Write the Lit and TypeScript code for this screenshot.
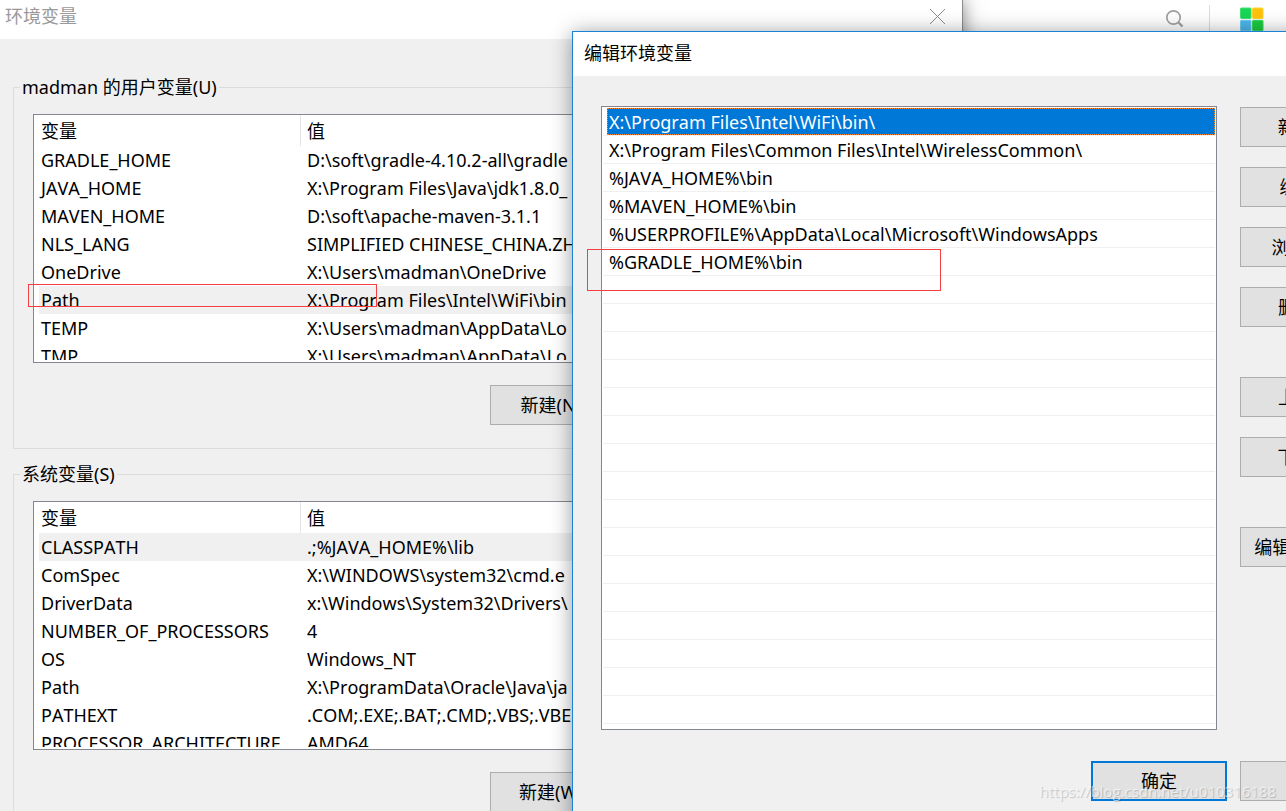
import { LitElement, html, css } from "lit";
import { customElement, property } from "lit/decorators.js";
import { classMap } from "lit/directives/class-map.js";

interface Variable {
  name: string;
  value: string;
  selected?: boolean;
}

const userVariables: Variable[] = [
  { name: "GRADLE_HOME", value: "D:\\soft\\gradle-4.10.2-all\\gradle" },
  { name: "JAVA_HOME", value: "X:\\Program Files\\Java\\jdk1.8.0_" },
  { name: "MAVEN_HOME", value: "D:\\soft\\apache-maven-3.1.1" },
  { name: "NLS_LANG", value: "SIMPLIFIED CHINESE_CHINA.ZH" },
  { name: "OneDrive", value: "X:\\Users\\madman\\OneDrive" },
  { name: "Path", value: "X:\\Program Files\\Intel\\WiFi\\bin", selected: true },
  { name: "TEMP", value: "X:\\Users\\madman\\AppData\\Lo" },
  { name: "TMP", value: "X:\\Users\\madman\\AppData\\Lo" },
];

const systemVariables: Variable[] = [
  { name: "CLASSPATH", value: ".;%JAVA_HOME%\\lib", selected: true },
  { name: "ComSpec", value: "X:\\WINDOWS\\system32\\cmd.e" },
  { name: "DriverData", value: "x:\\Windows\\System32\\Drivers\\" },
  { name: "NUMBER_OF_PROCESSORS", value: "4" },
  { name: "OS", value: "Windows_NT" },
  { name: "Path", value: "X:\\ProgramData\\Oracle\\Java\\ja" },
  { name: "PATHEXT", value: ".COM;.EXE;.BAT;.CMD;.VBS;.VBE" },
  { name: "PROCESSOR_ARCHITECTURE", value: "AMD64" },
];

const pathEntries = [
  "X:\\Program Files\\Intel\\WiFi\\bin\\",
  "X:\\Program Files\\Common Files\\Intel\\WirelessCommon\\",
  "%JAVA_HOME%\\bin",
  "%MAVEN_HOME%\\bin",
  "%USERPROFILE%\\AppData\\Local\\Microsoft\\WindowsApps",
  "%GRADLE_HOME%\\bin",
];

const visibleRows = 22;

const buttonStyles = css`
  button {
    box-sizing: border-box;
    width: 136px;
    height: 40px;
    padding: 0 0 2px;
    border: 1px solid #adadad;
    border-radius: 0;
    background: #e1e1e1;
    color: #000;
    font: inherit;
    white-space: nowrap;
  }
`;

@customElement("variable-group")
class VariableGroup extends LitElement {
  @property() label = "";
  @property({ attribute: false }) variables: Variable[] = [];
  @property({ attribute: false }) actions: string[] = [];

  static styles = [
    buttonStyles,
    css`
      :host {
        display: block;
      }
      fieldset {
        min-width: 0;
        margin: 0;
        padding: 14px 19px 23px;
        border: 1px solid #dcdcdc;
      }
      legend {
        margin-left: -13px;
        padding: 0 2px;
        line-height: 26px;
      }
      .frame {
        height: 245px;
        padding: 0 1px 2px 5px;
        border: 1px solid #828790;
        background: #fff;
      }
      .scroll {
        height: 100%;
        overflow: hidden;
      }
      table {
        width: 100%;
        table-layout: fixed;
        border-collapse: separate;
        border-spacing: 0;
      }
      .name-column {
        width: 262px;
      }
      th,
      td {
        padding: 0 2px;
        line-height: 28px;
        font-weight: 400;
        text-align: left;
        white-space: nowrap;
        overflow: hidden;
      }
      th {
        padding-top: 2px;
        line-height: 29px;
      }
      th + th,
      td + td {
        padding-left: 6px;
      }
      th:first-child {
        border-right: 1px solid #e5e5e5;
      }
      .selected {
        background: #f0f0f0;
      }
      .actions {
        display: flex;
        justify-content: flex-end;
        gap: 16px;
        margin-top: 22px;
      }
    `,
  ];

  render() {
    return html`
      <fieldset>
        <legend>${this.label}</legend>
        <div class="frame">
          <div class="scroll">
            <table>
              <colgroup>
                <col class="name-column" />
                <col />
              </colgroup>
              <thead>
                <tr>
                  <th scope="col">变量</th>
                  <th scope="col">值</th>
                </tr>
              </thead>
              <tbody>
                ${this.variables.map(
                  (v) => html`<tr class=${classMap({ selected: !!v.selected })}>
                    <td>${v.name}</td>
                    <td>${v.value}</td>
                  </tr>`
                )}
              </tbody>
            </table>
          </div>
        </div>
        <div class="actions">
          ${this.actions.map((a) => html`<button type="button">${a}</button>`)}
        </div>
      </fieldset>
    `;
  }
}

@customElement("path-editor")
class PathEditor extends LitElement {
  static styles = [
    buttonStyles,
    css`
      :host {
        display: block;
        box-sizing: border-box;
        border: 1px solid #1883d7;
        background: #f0f0f0;
        box-shadow: 0 2px 20px rgba(0, 0, 0, 0.4);
      }
      h2 {
        margin: 0;
        padding: 0 0 2px 11px;
        background: #fff;
        font-size: 18px;
        font-weight: 400;
        line-height: 42px;
      }
      .body {
        display: flex;
        gap: 23px;
        padding: 30px 27px 0 28px;
      }
      ul {
        flex: 1;
        min-width: 0;
        margin: 0;
        padding: 1px 1px 5px;
        border: 1px solid #828790;
        background: #fff;
        list-style: none;
      }
      li {
        box-sizing: border-box;
        height: 28px;
        padding-left: 4px;
        border-bottom: 1px solid #f0f0f0;
        line-height: 29px;
        white-space: nowrap;
      }
      li span {
        display: block;
        padding-left: 2px;
      }
      .selected {
        height: 27px;
        background: #0078d7;
        color: #fff;
        outline: 1px dotted #ff8728;
        outline-offset: -1px;
      }
      .commands {
        display: flex;
        flex-direction: column;
        gap: 20px;
        padding-top: 1px;
      }
      .section {
        margin-top: 30px;
      }
      .footer {
        display: flex;
        justify-content: flex-end;
        gap: 13px;
        padding: 31px 27px 28px;
      }
      .default {
        border: 2px solid #0078d7;
      }
      .mark {
        position: absolute;
        left: 14px;
        top: 217px;
        width: 352px;
        height: 40px;
        border: 1px solid #f73e3e;
        pointer-events: none;
      }
    `,
  ];

  render() {
    const rows = Array.from({ length: visibleRows }, (_, i) => pathEntries[i] ?? "");
    return html`
      <h2>编辑环境变量</h2>
      <div class="body">
        <ul role="listbox" aria-label="编辑环境变量">
          ${rows.map(
            (text, i) => html`<li role="option" aria-selected=${i === 0 ? "true" : "false"}>
              <span class=${classMap({ selected: i === 0 })}>${text}</span>
            </li>`
          )}
        </ul>
        <div class="commands">
          <button type="button">新建(N)</button>
          <button type="button">编辑(E)</button>
          <button type="button">浏览(B)...</button>
          <button type="button">删除(D)</button>
          <button type="button" class="section">上移(U)</button>
          <button type="button">下移(O)</button>
          <button type="button" class="section">编辑文本(T)...</button>
        </div>
      </div>
      <div class="footer">
        <button type="button" class="default">确定</button>
        <button type="button">取消</button>
      </div>
      <div class="mark"></div>
    `;
  }
}

@customElement("app-root")
class AppRoot extends LitElement {
  static styles = css`
    :host {
      display: block;
      position: relative;
      height: 100vh;
      overflow: hidden;
      background: #fff;
      color: #000;
      font-family: "Noto Sans", "Noto Sans CJK SC", sans-serif;
      font-size: 18px;
      font-kerning: none;
    }
    .toolbar {
      display: flex;
      justify-content: flex-end;
      align-items: center;
      gap: 24px;
      padding: 5px 22px 0 0;
    }
    .search {
      display: flex;
      padding: 0;
      border: 0;
      background: none;
    }
    .divider {
      width: 1px;
      height: 28px;
      background: #dcdcdc;
    }
    .tiles {
      margin-left: 5px;
    }
    .variables {
      position: absolute;
      left: 0;
      top: 0;
      width: 962px;
      border-right: 1px solid #8c8c8c;
      background: #f0f0f0;
      box-shadow: 0 0 18px rgba(0, 0, 0, 0.5);
    }
    .titlebar {
      display: flex;
      justify-content: space-between;
      align-items: flex-start;
      height: 39px;
      padding: 0 16px 0 5px;
      background: #fff;
    }
    h1 {
      margin: 0;
      color: #999;
      font-size: 18px;
      font-weight: 400;
      line-height: 32px;
    }
    .close {
      display: flex;
      padding: 8px 0 0;
      border: 0;
      background: none;
    }
    .groups {
      display: grid;
      gap: 12px;
      padding: 35px 12px 28px 13px;
    }
    .mark {
      position: absolute;
      left: 28px;
      top: 284px;
      width: 347px;
      height: 21px;
      border: 1px solid #f73e3e;
      pointer-events: none;
    }
    path-editor {
      position: absolute;
      left: 572px;
      top: 31px;
      width: 832px;
    }
    .watermark {
      position: absolute;
      right: 10px;
      bottom: 8px;
      color: rgba(255, 255, 255, 0.6);
      font-family: "Open Sans", sans-serif;
      font-size: 15px;
      line-height: 24px;
      text-shadow: 1px 1px 1px rgba(0, 0, 0, 0.2);
    }
  `;

  render() {
    return html`
      <div class="toolbar">
        <button class="search" type="button" aria-label="搜索">
          <svg width="20" height="20" viewBox="0 0 20 20" fill="none" stroke="#a0a0a0">
            <circle cx="8.5" cy="8.5" r="6.7" stroke-width="1.7" />
            <path d="M13.5 13.5l4 4" stroke-width="2.4" />
          </svg>
        </button>
        <div class="divider"></div>
        <svg class="tiles" width="25" height="25" viewBox="0 0 25 25">
          <rect x="1.5" y="1" width="10.5" height="10.5" rx="1" fill="#18d656" stroke="#40e070" />
          <rect x="13.5" y="1" width="10.5" height="10.5" rx="1" fill="#ffc20c" stroke="#ffd42e" />
          <rect x="1.5" y="13.3" width="10.5" height="10.5" rx="1" fill="#4cb8ea" stroke="#70c8f0" />
          <rect x="13.5" y="13.3" width="10.5" height="10.5" rx="1" fill="#1ccb40" stroke="#38d860" />
        </svg>
      </div>

      <section class="variables">
        <div class="titlebar">
          <h1>环境变量</h1>
          <button class="close" type="button" aria-label="关闭">
            <svg width="17" height="17" viewBox="0 0 17 17" stroke="#8c8c8c" fill="none">
              <path d="M1 1l15 15M16 1L1 16" />
            </svg>
          </button>
        </div>
        <div class="groups">
          <variable-group
            .label=${"madman 的用户变量(U)"}
            .variables=${userVariables}
            .actions=${["新建(N)...", "编辑(E)...", "删除(D)"]}
          ></variable-group>
          <variable-group
            .label=${"系统变量(S)"}
            .variables=${systemVariables}
            .actions=${["新建(W)...", "编辑(I)...", "删除(L)"]}
          ></variable-group>
        </div>
        <div class="mark"></div>
      </section>

      <path-editor></path-editor>
      <div class="watermark">https://blog.csdn.net/u010316188</div>
    `;
  }
}
